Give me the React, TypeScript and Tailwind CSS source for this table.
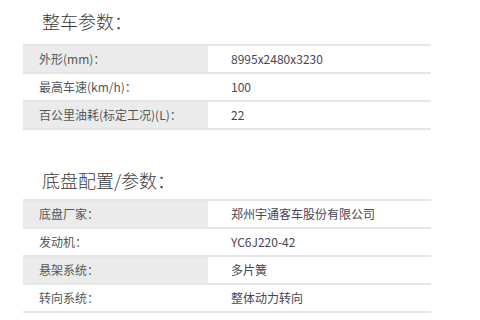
const font = { fontFamily: '"Noto Sans CJK SC", "Liberation Sans", sans-serif' };

type Row = { label: string; value: string };

const body: Row[] = [
  { label: "外形(mm)：", value: "8995x2480x3230" },
  { label: "最高车速(km/h)：", value: "100" },
  { label: "百公里油耗(标定工况)(L)：", value: "22" },
];

const chassis: Row[] = [
  { label: "底盘厂家：", value: "郑州宇通客车股份有限公司" },
  { label: "发动机：", value: "YC6J220-42" },
  { label: "悬架系统：", value: "多片簧" },
  { label: "转向系统：", value: "整体动力转向" },
];

function SpecTable({ rows }: { rows: Row[] }) {
  return (
    <div className="border-b-2 border-[#e6e6e6]">
      {rows.map((r, i) => (
        <div
          key={r.label}
          className="grid grid-cols-[185px_1fr] h-[28px] border-t-2 border-[#e6e6e6] text-[12px] leading-[26px]"
        >
          <div className={`pl-[16px] text-[#555] ${i % 2 === 0 ? "bg-[#ebebeb]" : "bg-white"}`}>
            {r.label}
          </div>
          <div className="pl-[23px] text-[#4a4452]">{r.value}</div>
        </div>
      ))}
    </div>
  );
}

export default function App() {
  return (
    <div className="w-[480px] h-[320px] bg-white overflow-hidden" style={font}>
      <div className="ml-[23px] w-[408px]">
        <h2 className="h-[44px] pt-[11px] pl-[19px] text-[18px] leading-[20px] font-light text-[#3a3a3a]">
          整车参数：
        </h2>
        <SpecTable rows={body} />
        <h2 className="h-[69px] pt-[40px] pl-[19px] text-[18px] leading-[20px] font-light text-[#3a3a3a]">
          底盘配置/参数：
        </h2>
        <SpecTable rows={chassis} />
      </div>
    </div>
  );
}
